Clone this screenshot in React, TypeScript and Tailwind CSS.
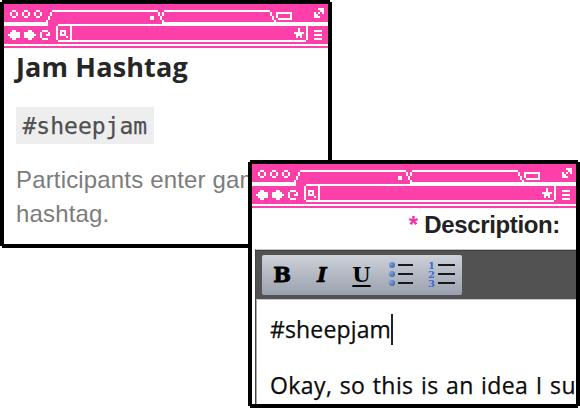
import type { ReactNode } from "react";

type Cell = [x: number, y: number, w: number, h: number];

const ring = (x: number): Cell[] => [
  [x + 1, 3, 2, 1],
  [x + 1, 6, 2, 1],
  [x, 4, 1, 2],
  [x + 3, 4, 1, 2],
];

// Pixel-art browser bar, on a 162 x 22 grid.
const chromeCells: Cell[] = [
  ...ring(3),
  ...ring(9),
  ...ring(15),
  // first tab
  [0, 9, 22, 2], [21, 8, 1, 2], [22, 6, 1, 2], [23, 4, 1, 2], [24, 3, 53, 1],
  [77, 4, 1, 2], [78, 6, 1, 2], [79, 8, 1, 1], [73, 6, 2, 2],
  // second tab
  [79, 4, 1, 2], [80, 3, 53, 1], [79, 9, 83, 2],
  [133, 4, 1, 2], [134, 6, 1, 2], [135, 8, 1, 1],
  // new tab button
  [136, 4, 8, 1], [136, 5, 1, 2], [143, 5, 1, 2], [137, 7, 7, 1],
  // expand
  [157, 2, 3, 1], [158, 3, 2, 1], [157, 4, 1, 1], [159, 4, 1, 1],
  [155, 4, 1, 1], [155, 5, 2, 1], [155, 6, 3, 1],
  // back, forward
  [2, 15, 6, 1], [3, 14, 5, 3], [4, 13, 2, 5],
  [10, 14, 5, 3], [10, 15, 6, 1], [12, 13, 2, 5],
  // reload
  [19, 13, 3, 1], [18, 14, 1, 3], [19, 17, 3, 1], [22, 14, 1, 2], [21, 15, 1, 1],
  // address field
  [27, 10, 60, 1], [26, 11, 1, 7], [27, 18, 124, 1], [151, 11, 1, 7], [33, 11, 1, 7],
  [28, 13, 3, 1], [28, 15, 3, 1], [28, 14, 1, 1], [30, 14, 1, 1], [31, 16, 1, 1],
  // star
  [147, 12, 1, 2], [145, 14, 5, 1], [146, 15, 3, 1], [146, 16, 1, 1], [148, 16, 1, 1],
  // menu
  [155, 13, 4, 1], [155, 15, 4, 1], [155, 17, 4, 1],
  [0, 20, 162, 1],
];

function BrowserBar() {
  return (
    <svg viewBox="0 0 162 22" className="block h-[44px] w-[324px] shrink-0 bg-[#ff40ab]" shapeRendering="crispEdges" fill="#fff">
      {chromeCells.map(([x, y, w, h], i) => (
        <rect key={i} x={x} y={y} width={w} height={h} />
      ))}
    </svg>
  );
}

function Window({ className, children }: { className: string; children: ReactNode }) {
  return (
    <section
      className={`w-[332px] h-[248px] bg-black p-1 [clip-path:polygon(2px_0,330px_0,330px_2px,332px_2px,332px_246px,330px_246px,330px_248px,2px_248px,2px_246px,0_246px,0_2px,2px_2px)] ${className}`}
    >
      <div className="flex h-full w-full flex-col overflow-hidden bg-white">
        <BrowserBar />
        {children}
      </div>
    </section>
  );
}

function ListIcon({ numbered }: { numbered?: boolean }) {
  return (
    <div className="flex flex-col">
      {[1, 2, 3].map((n) => (
        <div key={n} className="flex h-[9px] items-center">
          {numbered ? (
            <span className="w-[10px] text-[10px] leading-[9px] text-[#3f6bd0]">{n}</span>
          ) : (
            <span className="mr-[3px] h-[6px] w-[6px] rounded-full bg-radial-[at_30%_30%] from-[#7fa3de] to-[#2f5ca8]" />
          )}
          <span className={numbered ? "h-[2px] w-[17px] bg-[#17191d]" : "h-[2px] w-[15px] bg-[#17191d]"} />
        </div>
      ))}
    </div>
  );
}

export default function App() {
  return (
    <main className="relative h-[408px] w-[580px] overflow-hidden bg-white">
      <Window className="absolute left-0 top-0">
        <div className="pl-3">
          <h1 className="mt-[1px] h-[36px] whitespace-nowrap font-['Open_Sans',sans-serif] text-[27px] font-bold leading-[36px] tracking-[0.15px] text-[#262626]">
            Jam Hashtag
          </h1>
          <code className="mt-[22px] block h-[37px] w-[138px] whitespace-nowrap bg-[#eeeeee] pl-[6.5px] font-['DejaVu_Sans_Mono',monospace] text-[23px] leading-[38px] text-[#505050] [-webkit-text-stroke:0.25px_#505050]">
            #sheepjam
          </code>
          <p className="mt-[19px] whitespace-nowrap font-['Liberation_Sans',sans-serif] text-[24px] leading-[34px] tracking-[0.16px] text-[#7c7c7c]">
            Participants enter games
            <br />
            hashtag.
          </p>
        </div>
      </Window>

      <Window className="absolute left-[248px] top-[160px]">
        <div className="flex h-[41px] shrink-0 justify-end gap-1.5 pr-4 font-['Liberation_Sans',sans-serif] text-[24px] font-bold leading-[34px] text-[#222]">
          <span className="text-[#f531a5]">*</span>
          <span className="tracking-[-0.35px]">Description:</span>
        </div>
        <div className="ml-[3px] flex flex-1 flex-col overflow-hidden border-l border-[#444] border-t border-t-[#c4c4c4]">
          <div className="flex h-[50px] shrink-0 items-center border-b border-t border-b-[#c9c9c9] border-t-[#3f3f3f] bg-[#525252] pl-1.5">
            <div className="flex h-10 w-[200px] items-center rounded-[2px] bg-linear-to-b from-[#cdd1d9] to-[#9aa1ae] pb-[2px] font-['DejaVu_Serif',serif] text-[21px] font-bold leading-none text-black">
              <span className="w-10 text-center [-webkit-text-stroke:0.8px_black]">B</span>
              <span className="w-10 text-center italic [-webkit-text-stroke:0.6px_black]">I</span>
              <span className="w-[39px] text-center underline decoration-2 underline-offset-[3px]">U</span>
              <span className="ml-[8px] w-[39px]"><ListIcon /></span>
              <ListIcon numbered />
            </div>
          </div>
          <div className="flex-1 overflow-hidden border-l border-[#aaa] pl-[13px] pt-[11px] font-['Open_Sans',sans-serif] text-[23px] leading-[36px] text-[#0b0b0b] [-webkit-text-stroke:0.25px_#0b0b0b]">
            <div className="flex items-center whitespace-nowrap">
              <span className="tracking-[0.15px]">#sheepjam</span>
              <span className="h-[31px] w-[2px] bg-[#222]" />
            </div>
            <p className="mt-[20px] whitespace-nowrap tracking-[0.4px] [word-spacing:1.1px]">Okay, so this is an idea I su</p>
          </div>
        </div>
      </Window>
    </main>
  );
}
